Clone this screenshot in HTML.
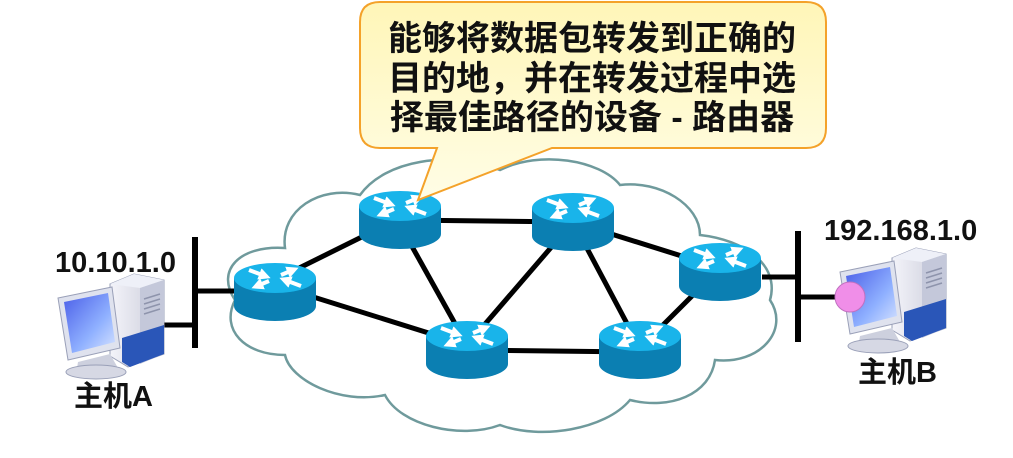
<!DOCTYPE html>
<html><head><meta charset="utf-8"><style>
html,body{margin:0;padding:0;background:#fff;width:1013px;height:458px;overflow:hidden}
svg text{font-family:"Liberation Sans","Noto Sans CJK SC",sans-serif;font-weight:bold;fill:#111}
</style></head><body>
<svg width="1013" height="458" viewBox="0 0 1013 458" xmlns="http://www.w3.org/2000/svg">
<defs>
<linearGradient id="yg" x1="0" y1="0" x2="0" y2="1"><stop offset="0" stop-color="#fff6b8"/><stop offset="1" stop-color="#fffde6"/></linearGradient>
<linearGradient id="scr" x1="0" y1="0" x2="1" y2="1"><stop offset="0" stop-color="#4a5ee8"/><stop offset="0.6" stop-color="#8fb0ff"/><stop offset="1" stop-color="#d8e4ff"/></linearGradient>
<linearGradient id="tw" x1="0" y1="0" x2="1" y2="0"><stop offset="0" stop-color="#f4f4fa"/><stop offset="1" stop-color="#c8cad8"/></linearGradient>
<marker id="ah" viewBox="0 0 10 10" refX="5" refY="5" markerWidth="3" markerHeight="3" orient="auto"><path d="M0,0 L10,5 L0,10 Z" fill="#fff"/></marker>
<g id="router">
<path d="M-41,-14 L-41,14 A41,15 0 0 0 41,14 L41,-14 Z" fill="#0b7fb2"/>
<ellipse cx="0" cy="-14" rx="41" ry="15" fill="#19b4ea"/>
<g stroke="#fff" stroke-width="4" fill="none" marker-end="url(#ah)">
<line x1="-26" y1="-22" x2="-10" y2="-16"/>
<line x1="26" y1="-6" x2="10" y2="-12"/>
<line x1="-6" y1="-11" x2="-18" y2="-6"/>
<line x1="6" y1="-17" x2="18" y2="-22"/>
</g>
</g>
<g id="pc">
<path d="M54,12 L78,2 L108,8 L108,82 L72,95 L54,84 Z" fill="url(#tw)" stroke="#9aa0b8" stroke-width="1"/>
<path d="M54,12 L78,2 L108,8 L84,16 Z" fill="#eef0f8"/>
<path d="M84,16 L108,8 L108,82 L84,92 Z" fill="#c4c8da"/>
<g stroke="#8e94ac" stroke-width="1.5"><line x1="88" y1="27" x2="104" y2="22"/><line x1="88" y1="32" x2="104" y2="27"/><line x1="88" y1="37" x2="104" y2="32"/><line x1="88" y1="42" x2="104" y2="37"/></g>
<path d="M66,66 L108,53 L108,82 L74,95 L66,90 Z" fill="#2a56b8"/>
<path d="M2,26 L56,15 L64,76 L12,88 Z" fill="#dfe2ee" stroke="#9aa0b8"/>
<path d="M8,30 L52,21 L59,70 L16,81 Z" fill="url(#scr)"/>
<path d="M22,90 L54,82 L62,96 L20,102 Z" fill="#cdd0de"/>
<ellipse cx="40" cy="100" rx="30" ry="7" fill="#d6d8e4" stroke="#9aa0b8"/>
</g>
</defs>

<path d="M235,300 C215,270 240,245 285,248 C280,210 320,185 360,195 C385,160 450,150 500,170 C540,150 600,160 620,185 C660,180 700,205 700,235 C745,240 780,265 770,300 C790,330 760,365 715,360 C710,395 670,410 630,400 C605,430 540,440 500,425 C460,440 400,425 385,395 C340,405 290,380 285,355 C245,355 220,330 235,300 Z" fill="#fff" stroke="#6f9a9c" stroke-width="2.5"/>

<g stroke="#000" stroke-width="5" stroke-linecap="butt">
<line x1="275" y1="280" x2="400" y2="218"/>
<line x1="275" y1="285" x2="467" y2="345"/>
<line x1="400" y1="220" x2="573" y2="222"/>
<line x1="400" y1="225" x2="467" y2="345"/>
<line x1="573" y1="222" x2="467" y2="345"/>
<line x1="573" y1="222" x2="720" y2="268"/>
<line x1="573" y1="222" x2="640" y2="348"/>
<line x1="720" y1="268" x2="640" y2="348"/>
<line x1="467" y1="350" x2="640" y2="352"/>
<line x1="197" y1="291" x2="240" y2="291"/>
<line x1="163" y1="325" x2="197" y2="325"/>
<line x1="762" y1="277" x2="800" y2="277"/>
<line x1="800" y1="297" x2="840" y2="297"/>
</g>
<g stroke="#000" stroke-width="6">
<line x1="195" y1="237" x2="195" y2="348"/>
<line x1="798" y1="231" x2="798" y2="342"/>
</g>

<use href="#router" x="275" y="292"/>
<use href="#router" x="400" y="220"/>
<use href="#router" x="573" y="222"/>
<use href="#router" x="720" y="272"/>
<use href="#router" x="467" y="350"/>
<use href="#router" x="640" y="350"/>

<path d="M380,2 L806,2 Q826,2 826,22 L826,128 Q826,148 806,148 L552,148 L418,200 L437,148 L380,148 Q360,148 360,128 L360,22 Q360,2 380,2 Z" fill="url(#yg)" stroke="#f4a22a" stroke-width="2"/>
<text x="592" y="50" font-size="34" text-anchor="middle">能够将数据包转发到正确的</text>
<text x="592" y="90" font-size="34" text-anchor="middle">目的地，并在转发过程中选</text>
<text x="592" y="129" font-size="34" text-anchor="middle">择最佳路径的设备 - 路由器</text>

<use href="#pc" x="56" y="272"/>
<use href="#pc" x="838" y="246"/>
<circle cx="850" cy="297" r="15" fill="#f08ee8" stroke="#c070c0"/>
<text x="55" y="272" font-size="29">10.10.1.0</text>
<text x="74" y="406" font-size="29">主机A</text>
<text x="824" y="240" font-size="29">192.168.1.0</text>
<text x="858" y="382" font-size="29">主机B</text>
</svg>
</body></html>
